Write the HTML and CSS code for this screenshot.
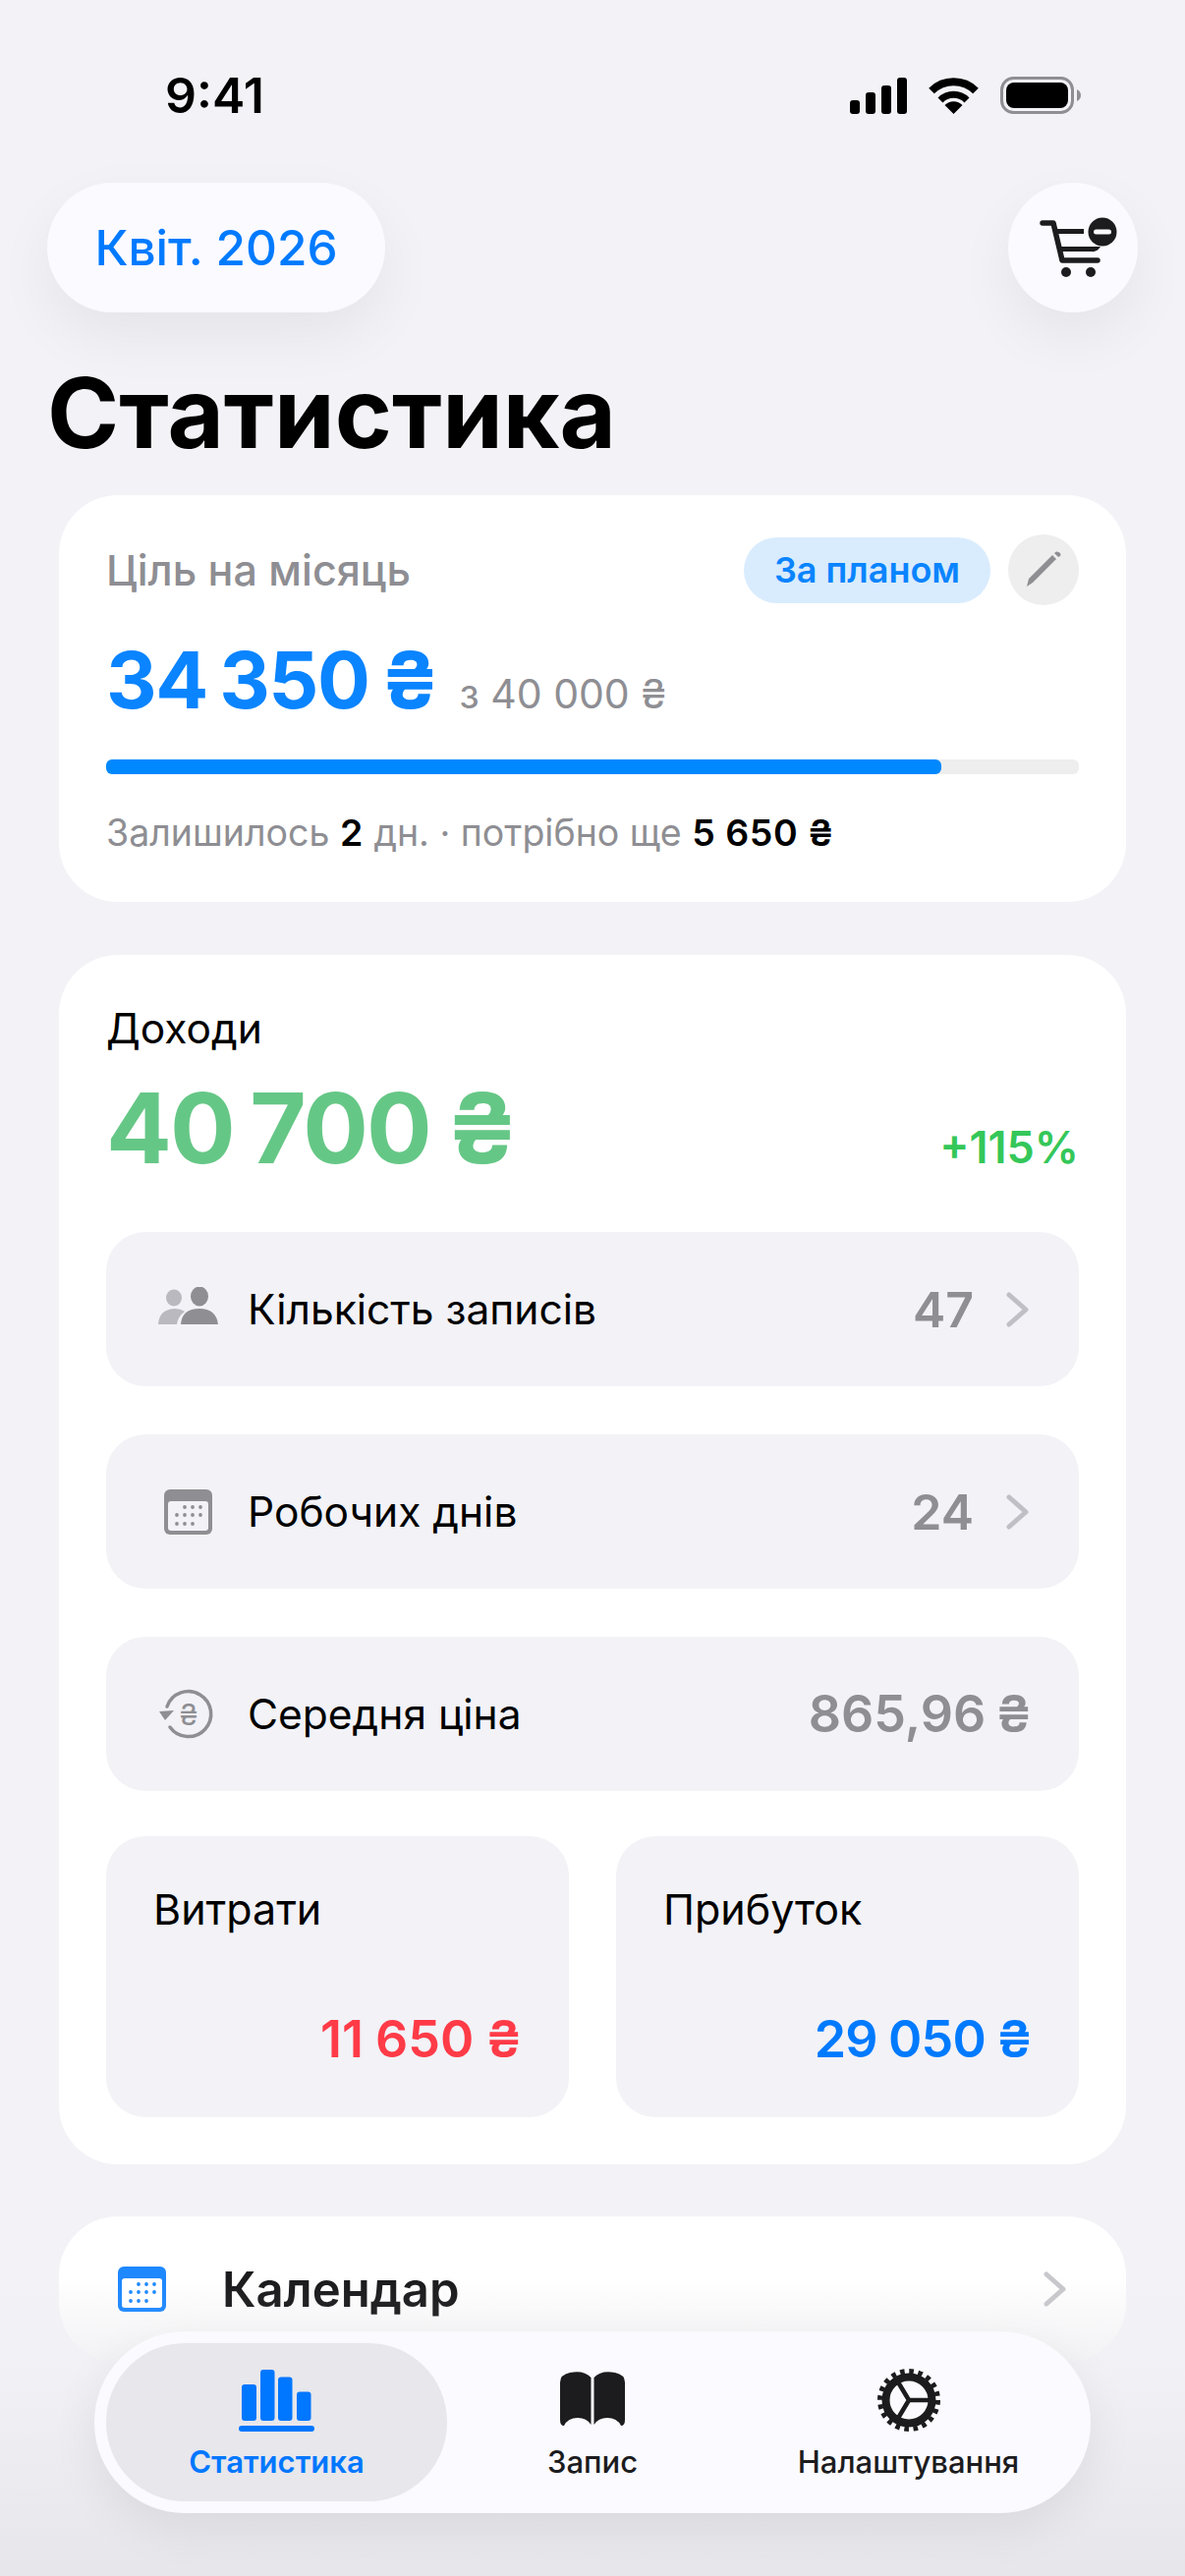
FILE: index.html
```html
<!DOCTYPE html>
<html>
<head>
    <title>Статистика</title>
    <link rel="stylesheet" href="styles.css">
</head>
<body>
    <div class="screen">
        <div class="status">
            <span class="time">9:41</span>
            <div class="status-icons">
                <svg width="58" height="37" viewBox="0 0 58 37"><rect x="0" y="23" width="10" height="14" rx="3"/><rect x="16" y="15" width="10" height="22" rx="3"/><rect x="32" y="8" width="10" height="29" rx="3"/><rect x="48" y="0" width="10" height="37" rx="3"/></svg>
                <svg width="51" height="37" viewBox="0 0 51 37"><path d="M3 13.500A32 32 0 0 1 48 13.500" fill="none" stroke="#000" stroke-width="8"/><path d="M12 23A19 19 0 0 1 39 23" fill="none" stroke="#000" stroke-width="7"/><path d="M25.500 37L16.500 28A12.500 12.500 0 0 1 34.500 28Z"/></svg>
                <svg width="84" height="38" viewBox="0 0 84 38"><rect x="1.500" y="1.500" width="72" height="35" rx="12" fill="none" stroke="#8e8e93" stroke-width="3"/><rect x="6" y="6" width="63" height="26" rx="8"/><path d="M78 13Q82 15 82 19Q82 23 78 25Z" fill="#8e8e93"/></svg>
            </div>
        </div>

        <div class="topbar">
            <button class="month">Квіт. 2026</button>
            <button class="cart">
                <svg width="90" height="75" viewBox="0 0 90 75"><path d="M10 12H21L30 50H66" fill="none" stroke="#1c1c1e" stroke-width="5.500" stroke-linecap="round" stroke-linejoin="round"/><path d="M24 18H52V23H25ZM27 36H69Q65 42 60 41H28Z" fill="#1c1c1e"/><circle cx="34" cy="62" r="5" fill="#1c1c1e"/><circle cx="59" cy="62" r="5" fill="#1c1c1e"/><circle cx="71" cy="21" r="14.500" fill="#1c1c1e"/><rect x="62" y="18.500" width="18" height="5" rx="2.500" fill="#fafaff"/></svg>
            </button>
        </div>

        <h1>Статистика</h1>

        <div class="card goal">
            <div class="goal-head">
                <span class="goal-title">Ціль на місяць</span>
                <span class="badge">За планом</span>
                <button class="edit">
                    <svg width="40" height="40" viewBox="0 0 40 40"><path d="M3 37L5 29L29 5L33 9L9 33Z" fill="#8e8e93"/><path d="M31 3L33 1.500Q35 1 37 3Q38 5 37 6L35 7Z" fill="#8e8e93"/></svg>
                </button>
            </div>
            <div class="goal-sum"><span class="goal-value">34 350 ₴</span><span class="goal-of">з 40 000 ₴</span></div>
            <div class="progress"><div class="progress-fill" style="width: 85.9%"></div></div>
            <div class="goal-note">Залишилось <b>2</b> дн. · потрібно ще <b>5 650 ₴</b></div>
        </div>

        <div class="card income">
            <div class="income-title">Доходи</div>
            <div class="income-sum"><span class="income-value">40 700 ₴</span><span class="income-delta">+115%</span></div>

            <div class="rows">
                <div class="row">
                    <svg class="row-icon" width="64" height="46" viewBox="0 0 64 46"><ellipse cx="17" cy="11" rx="8" ry="8.500" fill="#b9b9bf"/><path d="M1 38Q2 23 17 22Q24 22 28 25Q21 30 20 38Z" fill="#b9b9bf"/><ellipse cx="43" cy="9.500" rx="9" ry="10" fill="#8e8e93"/><path d="M24 38Q25 22 43 22Q60 22 62 38Z" fill="#8e8e93"/></svg>
                    <span class="row-label">Кількість записів</span>
                    <span class="row-value">47</span>
                    <svg class="chevron" width="24" height="36" viewBox="0 0 24 36"><path d="M3 3L20 18L3 33" fill="none" stroke="#bfbfc5" stroke-width="5" stroke-linecap="round" stroke-linejoin="round"/></svg>
                </div>
                <div class="row">
                    <svg class="row-icon" width="64" height="46" viewBox="-7 0 64 46"><rect width="49" height="46" rx="6" fill="#8e8e93"/><rect x="4" y="12" width="41" height="30" rx="3" fill="#f2f2f7"/><g fill="#8e8e93"><circle cx="21" cy="18" r="1.900"/><circle cx="29" cy="18" r="1.900"/><circle cx="37" cy="18" r="1.900"/><circle cx="13" cy="26" r="1.900"/><circle cx="21" cy="26" r="1.900"/><circle cx="29" cy="26" r="1.900"/><circle cx="37" cy="26" r="1.900"/><circle cx="13" cy="35" r="1.900"/><circle cx="21" cy="35" r="1.900"/><circle cx="29" cy="35" r="1.900"/></g></svg>
                    <span class="row-label">Робочих днів</span>
                    <span class="row-value">24</span>
                    <svg class="chevron" width="24" height="36" viewBox="0 0 24 36"><path d="M3 3L20 18L3 33" fill="none" stroke="#bfbfc5" stroke-width="5" stroke-linecap="round" stroke-linejoin="round"/></svg>
                </div>
                <div class="row">
                    <svg class="row-icon" width="64" height="56" viewBox="-4 0 64 56"><path d="M6 20A23 23 0 1 1 9 41" fill="none" stroke="#8e8e93" stroke-width="3.500" stroke-linecap="round"/><path d="M-2 25L13 24L4 34Z" fill="#8e8e93"/><text x="28" y="39" text-anchor="middle" class="icon-sign">₴</text></svg>
                    <span class="row-label">Середня ціна</span>
                    <span class="row-value row-price">865,96 ₴</span>
                </div>
            </div>

            <div class="totals">
                <div class="total">
                    <span class="total-title">Витрати</span>
                    <span class="total-value red">11 650 ₴</span>
                </div>
                <div class="total">
                    <span class="total-title">Прибуток</span>
                    <span class="total-value blue">29 050 ₴</span>
                </div>
            </div>
        </div>

        <div class="card calendar">
            <svg class="cal-icon" width="49" height="46" viewBox="0 0 49 46"><rect width="49" height="46" rx="6" fill="#1e88ff"/><rect x="4" y="12" width="41" height="30" rx="3" fill="#fff"/><g fill="#1e88ff"><circle cx="21" cy="18" r="1.900"/><circle cx="29" cy="18" r="1.900"/><circle cx="37" cy="18" r="1.900"/><circle cx="13" cy="26" r="1.900"/><circle cx="21" cy="26" r="1.900"/><circle cx="29" cy="26" r="1.900"/><circle cx="37" cy="26" r="1.900"/><circle cx="13" cy="35" r="1.900"/><circle cx="21" cy="35" r="1.900"/><circle cx="29" cy="35" r="1.900"/></g></svg>
            <span class="cal-label">Календар</span>
            <svg width="24" height="36" viewBox="0 0 24 36"><path d="M3 3L20 18L3 33" fill="none" stroke="#c8c8cc" stroke-width="5" stroke-linecap="round" stroke-linejoin="round"/></svg>
        </div>

        <div class="fade"></div>

        <nav class="tabbar">
            <a class="tab active">
                <svg width="78" height="64" viewBox="0 0 78 64"><rect x="3" y="15" width="15" height="37" rx="3"/><rect x="22" y="0" width="14.500" height="52" rx="3"/><rect x="40" y="7.500" width="14.500" height="44.500" rx="3"/><rect x="59" y="22.500" width="14.500" height="29.500" rx="3"/><rect x="0" y="57" width="77" height="6" rx="3"/></svg>
                <span>Статистика</span>
            </a>
            <a class="tab">
                <svg width="66" height="64" viewBox="0 0 66 64"><path d="M31.500 8Q24 0 10 3Q0 5 0 13V51Q0 57 4 57Q8 49 18 49Q27 49 31.500 56Z"/><path d="M34.500 8Q42 0 56 3Q66 5 66 13V51Q66 57 62 57Q58 49 48 49Q39 49 34.500 56Z"/></svg>
                <span>Запис</span>
            </a>
            <a class="tab">
                <svg width="66" height="66" viewBox="0 0 66 66"><circle cx="33" cy="33" r="23.500" fill="none" stroke="#1c1c1e" stroke-width="8"/><circle cx="33" cy="33" r="29.500" fill="none" stroke="#1c1c1e" stroke-width="5" stroke-dasharray="4.630 4.640"/><path d="M33 33H56M33 33L21 13M33 33L21 53" fill="none" stroke="#1c1c1e" stroke-width="4.500"/></svg>
                <span>Налаштування</span>
            </a>
        </nav>
    </div>
</body>
</html>
```

FILE: styles.css
```css
body {
    margin: 0;
    background: #f2f2f7;
    font-family: Inter, "Noto Sans", sans-serif;
    color: #000;
}
button {
    border: none;
    padding: 0;
    font-family: inherit;
}
.screen {
    position: relative;
    width: 1206px;
    height: 2622px;
    overflow: hidden;
    background: #f2f2f7;
}

/* status bar */
.status {
    display: flex;
    justify-content: space-between;
    align-items: center;
    height: 38px;
    padding: 78px 104px 0 168px;
}
.time {
    font-size: 50px;
    font-weight: 600;
}
.status-icons {
    display: flex;
    align-items: center;
    gap: 22px;
}

/* header */
.topbar {
    display: flex;
    justify-content: space-between;
    margin-top: 70px;
    padding: 0 48px;
}
.month {
    width: 344px;
    height: 132px;
    border-radius: 66px;
    background: #fafaff;
    color: #007aff;
    font-size: 49.5px;
    font-weight: 500;
    box-shadow: 0 24px 60px rgba(0,0,0,0.06);
}
.cart {
    display: flex;
    align-items: center;
    justify-content: center;
    width: 132px;
    height: 132px;
    border-radius: 66px;
    background: #fafaff;
    box-shadow: 0 24px 60px rgba(0,0,0,0.06);
}
.cart svg {
    margin-left: 8px;
}
h1 {
    margin: 42px 0 0 48px;
    height: 144px;
    font-size: 99px;
    line-height: 120px;
    font-weight: 700;
}

/* cards */
.card {
    margin: 0 60px;
    background: #fff;
    border-radius: 60px;
}
.goal {
    height: 414px;
    padding: 40px 48px 0;
    box-sizing: border-box;
}
.goal-head {
    display: flex;
    align-items: center;
}
.goal-title {
    flex: 1;
    font-size: 43px;
    font-weight: 500;
    color: #8e8e93;
}
.badge {
    display: flex;
    align-items: center;
    justify-content: center;
    width: 251px;
    height: 67px;
    border-radius: 34px;
    background: #d9ecfd;
    color: #0a84ff;
    font-size: 36px;
    font-weight: 600;
}
.edit {
    display: flex;
    align-items: center;
    justify-content: center;
    width: 72px;
    height: 72px;
    margin-left: 18px;
    border-radius: 36px;
    background: #eee;
}
.goal-sum {
    display: flex;
    align-items: baseline;
    margin-top: 29px;
}
.goal-value {
    font-size: 80px;
    line-height: 94px;
    font-weight: 700;
    color: #0a84ff;
    letter-spacing: -1.5px;
    word-spacing: -5px;
}
.goal-of {
    margin-left: 22px;
    font-size: 41px;
    color: #8e8e93;
}
.progress {
    height: 15px;
    margin-top: 34px;
    border-radius: 6px;
    background: #eee;
}
.progress-fill {
    height: 100%;
    border-radius: 6px;
    background: #0088ff;
}
.goal-note {
    margin-top: 37px;
    font-size: 37.5px;
    color: #8e8e93;
}
.goal-note b {
    color: #000;
    font-weight: 600;
    letter-spacing: 0.5px;
}

.income {
    height: 1231px;
    margin-top: 54px;
    padding: 50px 48px 0;
    box-sizing: border-box;
}
.income-title {
    font-size: 42.5px;
    line-height: 50px;
}
.income-sum {
    display: flex;
    justify-content: space-between;
    align-items: baseline;
    margin-top: 16px;
}
.income-value {
    font-size: 99px;
    line-height: 120px;
    font-weight: 700;
    color: #65c786;
    letter-spacing: -2px;
    word-spacing: -5px;
}
.income-delta {
    font-size: 45px;
    font-weight: 600;
    color: #34c759;
}
.rows {
    display: flex;
    flex-direction: column;
    gap: 49px;
    margin-top: 46px;
}
.row {
    display: flex;
    align-items: center;
    height: 157px;
    padding: 0 48px 0 52px;
    border-radius: 40px;
    background: #f2f2f7;
}
.row-label {
    flex: 1;
    margin-left: 28px;
    font-size: 42.5px;
}
.row-value {
    font-size: 50px;
    font-weight: 600;
    color: #8e8e93;
}
.row-price {
    font-size: 52px;
    word-spacing: -3px;
}
.row-value + .chevron {
    margin-left: 33px;
    margin-right: 2px;
}
.icon-sign {
    font-size: 30px;
    fill: #8e8e93;
}
.totals {
    display: grid;
    grid-template-columns: 1fr 1fr;
    gap: 48px;
    margin-top: 46px;
}
.total {
    display: flex;
    flex-direction: column;
    justify-content: space-between;
    height: 286px;
    padding: 48px;
    box-sizing: border-box;
    border-radius: 40px;
    background: #f2f2f7;
}
.total-title {
    font-size: 43px;
}
.total-value {
    align-self: flex-end;
    font-size: 52px;
    font-weight: 600;
    word-spacing: -1px;
}
.red {
    color: #ff3b47;
}
.blue {
    color: #007aff;
    letter-spacing: -0.8px;
}

.calendar {
    display: flex;
    align-items: center;
    height: 148px;
    margin-top: 53px;
    padding: 0 60px;
    box-sizing: border-box;
    background: linear-gradient(#fff 40%, #f4f4f6);
}
.cal-label {
    flex: 1;
    margin-left: 57px;
    font-size: 49px;
    font-weight: 600;
    color: #1c1c1e;
}

/* bottom */
.fade {
    position: absolute;
    left: 0;
    right: 0;
    bottom: 0;
    height: 300px;
    background: linear-gradient(rgba(229,229,234,0), rgba(229,229,234,0.12) 30%, rgba(229,229,234,0.95));
}
.tabbar {
    position: absolute;
    left: 96px;
    top: 2373px;
    display: grid;
    grid-template-columns: 347px 296px 1fr;
    width: 1014px;
    height: 185px;
    padding: 12px;
    box-sizing: border-box;
    border-radius: 92px;
    background: #fafaff;
    box-shadow: 0 16px 50px rgba(0,0,0,0.07);
}
.tab {
    display: flex;
    flex-direction: column;
    align-items: center;
    justify-content: flex-end;
    gap: 11px;
    padding-bottom: 22px;
    border-radius: 80px;
    font-size: 31px;
    font-weight: 500;
    color: #1c1c1e;
    fill: #1c1c1e;
}
.tab.active {
    background: #e7e7ec;
    color: #0077ff;
    fill: #0077ff;
    font-weight: 600;
}
```
